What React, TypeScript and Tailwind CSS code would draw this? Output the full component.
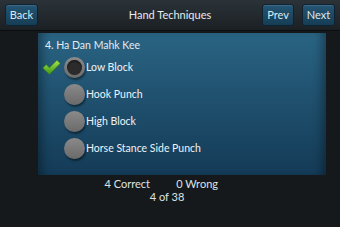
import React from "react";

const options = ["Low Block", "Hook Punch", "High Block", "Horse Stance Side Punch"];

function NavButton({ label, className }: { label: string; className?: string }) {
  return (
    <button
      type="button"
      className={`flex h-[22px] items-center justify-center rounded-[3px] border border-[#0e2231] bg-gradient-to-b from-[#245674] to-[#163d56] text-[11px] text-[#dfe8ee] shadow-[inset_0_1px_0_rgba(255,255,255,0.12)] ${className ?? ""}`}
    >
      {label}
    </button>
  );
}

function CheckMark() {
  return (
    <svg width="19" height="17" viewBox="0 0 19 17" aria-hidden="true">
      <defs>
        <linearGradient id="chk" x1="0" y1="0" x2="0" y2="1">
          <stop offset="0" stopColor="#a6e654" />
          <stop offset="1" stopColor="#3c9410" />
        </linearGradient>
      </defs>
      <path d="M0.8 9 L4.2 5.6 L7.4 8.8 L15 1.2 L18.2 4.4 L7.4 15.6 Z" fill="url(#chk)" stroke="#2f7a0c" strokeWidth="0.6" strokeLinejoin="round" />
    </svg>
  );
}

export default function App() {
  return (
    <div className="flex h-[227px] w-[340px] flex-col overflow-hidden bg-[#15191c] font-['Lato','Noto_Sans',sans-serif] text-white">
      <header className="grid h-[31px] grid-cols-[1fr_auto_1fr] items-center border-b border-[#0b0d0f] bg-gradient-to-b from-[#2b3338] to-[#1b2024] px-[5px]">
        <div className="flex">
          <NavButton label="Back" className="h-[20px] w-[33px]" />
        </div>
        <h1 className="text-center text-[11px] text-[#e6ecef]">Hand Techniques</h1>
        <div className="flex justify-end gap-[8px]">
          <NavButton label="Prev" className="w-[32px]" />
          <NavButton label="Next" className="w-[33px]" />
        </div>
      </header>

      <main className="ml-[38px] mr-[14px] mt-[2px] h-[142px] bg-gradient-to-b from-[#2a6483] to-[#143b57] shadow-[inset_10px_0_10px_-6px_rgba(0,0,0,0.35),inset_-10px_0_10px_-6px_rgba(0,0,0,0.35)]">
        <p className="pl-[7px] pt-[4px] text-[10.5px] leading-[16px] text-[#e3ebf0]">4. Ha Dan Mahk Kee</p>
        <ul className="mt-[1px]">
          {options.map((opt, i) => (
            <li key={opt} className="flex h-[27px] items-center">
              <span className="flex w-[26px] justify-end pr-[3px]">{i === 0 && <CheckMark />}</span>
              <span
                className={`h-[21px] w-[21px] shrink-0 rounded-full bg-gradient-to-b from-[#8a8a8a] to-[#6a6a6a] shadow-[1px_2px_2px_rgba(0,0,0,0.45)] ${i === 0 ? "flex items-center justify-center" : ""}`}
              >
                {i === 0 && <span className="h-[15px] w-[15px] rounded-full bg-[#2b2b2b] shadow-[inset_0_1px_2px_rgba(0,0,0,0.6)]" />}
              </span>
              <span className="ml-[1px] text-[10.5px] text-[#eef3f6]">{opt}</span>
            </li>
          ))}
        </ul>
      </main>

      <footer className="mt-[2px] flex flex-col items-center text-[11px] leading-[13px] text-[#dde3e6]">
        <div className="flex w-full">
          <span className="w-[150px] text-right">4 Correct</span>
          <span className="w-[68px] text-right">0 Wrong</span>
        </div>
        <div className="pr-[6px]">4 of 38</div>
      </footer>
    </div>
  );
}
